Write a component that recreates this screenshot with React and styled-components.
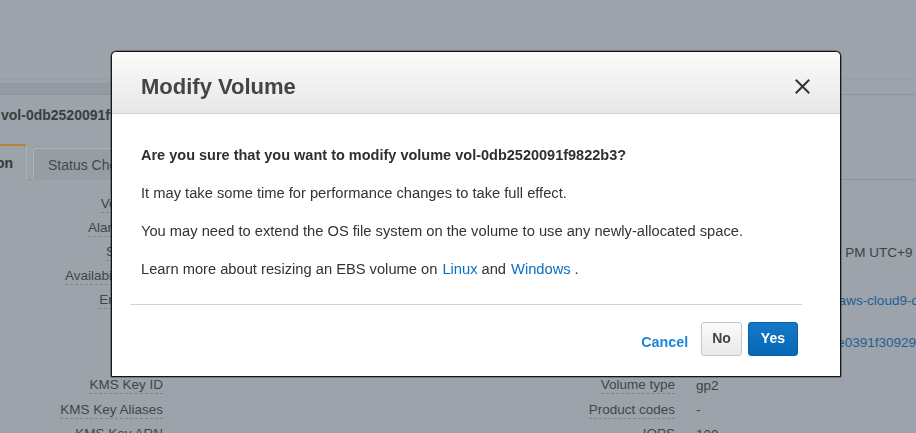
import styled, { createGlobalStyle } from "styled-components";

const Global = createGlobalStyle`
  html, body {
    margin: 0;
    padding: 0;
    width: 916px;
    height: 433px;
    overflow: hidden;
    background: #9ca3aa;
    font-family: "Liberation Sans", Arial, Helvetica, sans-serif;
  }
`;

// dimmed console page behind the dialog
const Page = styled.div`
  width: 916px;
  height: 433px;
  overflow: hidden;
  background: #9ca3aa;
  color: #3e4246;
  font-size: 13.5px;
`;

const TopSpace = styled.div`
  height: 79px;
`;

const Toolbar = styled.div`
  height: 14px;
  border-top: 1px solid #979ea5;
  border-bottom: 1px solid #8e949b;
  display: flex;
  align-items: flex-end;
`;

const ToolbarBand = styled.div`
  width: 420px;
  height: 11px;
  background: #939aa1;
`;

const VolumeTitle = styled.h1`
  margin: 0;
  height: 40px;
  display: flex;
  align-items: center;
  padding-left: 1px;
  font-size: 14px;
  font-weight: 700;
  color: #3a3e42;
  white-space: nowrap;
`;

const Tabs = styled.div`
  display: flex;
  align-items: flex-end;
  height: 44px;
  border-bottom: 1px solid #8e949b;
  margin-left: -79px;
`;

const Tab = styled.div`
  height: ${(p) => (p.$active ? "34px" : "31px")};
  padding: 0 13px 0 14px;
  margin-right: 6px;
  display: flex;
  align-items: center;
  font-size: 14px;
  font-weight: ${(p) => (p.$active ? 700 : 400)};
  color: ${(p) => (p.$active ? "#34383c" : "#44484c")};
  background: ${(p) => (p.$active ? "#9ca3aa" : "#979da4")};
  border: 1px solid #aeb3b8;
  border-top: ${(p) => (p.$active ? "2px solid #b5833a" : "1px solid #aeb3b8")};
  border-bottom: none;
  border-radius: 3px 3px 0 0;
  margin-bottom: -1px;
  white-space: nowrap;
`;

const Details = styled.div`
  display: grid;
  grid-template-columns: 163px 292px 220px 1fr;
  padding-top: 11px;
`;

const Cell = styled.div`
  height: ${(p) => p.$h}px;
  display: flex;
  align-items: center;
  justify-content: ${(p) => (p.$label ? "flex-end" : "flex-start")};
  padding-left: ${(p) => (p.$label ? 0 : 21)}px;
  white-space: nowrap;
`;

const Label = styled.span`
  color: #42464a;
  border-bottom: 1px dashed #80868c;
  line-height: 17px;
`;

const Value = styled.span`
  color: ${(p) => (p.$link ? "#1f5f97" : "#3e4246")};
  line-height: 17px;
`;

// dialog
const Modal = styled.div`
  position: fixed;
  left: 111px;
  top: 51px;
  width: 728px;
  height: 324px;
  background: #fff;
  border: 1px solid #141414;
  border-radius: 5px 5px 0 0;
  box-shadow: 0 0 0 0.5px rgba(0, 0, 0, 0.5);
  display: flex;
  flex-direction: column;
  color: #333;
`;

const Header = styled.div`
  height: 62px;
  flex: none;
  box-sizing: border-box;
  padding: 8px 30px 0 29px;
  border-bottom: 1px solid #cfcfcf;
  border-radius: 5px 5px 0 0;
  background: linear-gradient(#fbfbfb, #e7e7e7);
  display: flex;
  align-items: center;
  justify-content: space-between;
`;

const Title = styled.h2`
  margin: 0;
  font-size: 22px;
  font-weight: 700;
  color: #444;
`;

const Close = styled.button`
  border: 0;
  background: none;
  padding: 0;
  width: 16px;
  height: 16px;
  display: flex;
  align-items: center;
  justify-content: center;
  cursor: pointer;
`;

const Body = styled.div`
  padding: 31px 30px 0 29px;
  display: flex;
  flex-direction: column;
  gap: 18px;
`;

const Para = styled.p`
  margin: 0;
  font-size: ${(p) => (p.$strong ? 14.5 : 14.7)}px;
  line-height: 20px;
  font-weight: ${(p) => (p.$strong ? 700 : 400)};
  color: ${(p) => (p.$strong ? "#2f2f2f" : "#333")};
`;

const Link = styled.a`
  color: #0a6fc2;
  text-decoration: none;
  margin: 0 4px 0 5px;
`;

const Divider = styled.hr`
  margin: 25px 38px 0 18px;
  border: 0;
  border-top: 1px solid #d3d3d3;
`;

const Footer = styled.div`
  display: flex;
  justify-content: flex-end;
  align-items: center;
  padding: 17px 42px 0 0;
`;

const Cancel = styled.a`
  color: #1c86da;
  font-weight: 700;
  font-size: 14.3px;
  margin: 6px 7px 0 0;
  text-decoration: none;
`;

const Button = styled.button`
  height: 34px;
  padding: 0 ${(p) => (p.$primary ? 12 : 10)}px 2px;
  margin-left: 6px;
  font-family: inherit;
  font-size: 14px;
  font-weight: 700;
  border-radius: 3px;
  border: 1px solid ${(p) => (p.$primary ? "#0a5fa6" : "#c6c6c6")};
  color: ${(p) => (p.$primary ? "#fff" : "#444")};
  background: ${(p) =>
    p.$primary
      ? "linear-gradient(#1479c9, #0767b6)"
      : "linear-gradient(#fbfbfb, #e8e8e8)"};
`;

const rows = [
  { h: 25, l: "Volume ID", v: "vol-0db2520091f9822b3", r: "Size", rv: "10 GiB" },
  { h: 24, l: "Alarm status", v: "None", r: "Created", rv: "" },
  { h: 24, l: "Snapshot", v: "snap-0ab5c7e22f4a9c1d", r: "Created", rv: "May 26, 2020 at 2:41:39 PM UTC+9" },
  { h: 24, l: "Availability Zone", v: "ap-northeast-1a", r: "State", rv: "in-use" },
  { h: 24, l: "Encryption", v: "Not Encrypted", r: "Attachment information", rv: "i-04e1a9c2b7d3a8e51 (aws-cloud9-dev)", link: true },
  { h: 20, l: "", v: "", r: "", rv: "" },
  { h: 20, l: "", v: "", r: "Snapshot", rv: "snap-07c14b2d9a8f0c6e0391f30929a", link: true },
  { h: 21, l: "", v: "", r: "", rv: "" },
  { h: 24, l: "KMS Key ID", v: "", r: "Volume type", rv: "gp2" },
  { h: 25, l: "KMS Key Aliases", v: "", r: "Product codes", rv: "-" },
  { h: 24, l: "KMS Key ARN", v: "", r: "IOPS", rv: "100" },
];

function CloseIcon() {
  return (
    <svg width="15" height="15" viewBox="0 0 15 15">
      <path d="M1.5 1.5 L13.5 13.5 M13.5 1.5 L1.5 13.5" stroke="#333" strokeWidth="2" strokeLinecap="square" />
    </svg>
  );
}

export default function App() {
  return (
    <>
      <Global />
      <Page>
        <TopSpace />
        <Toolbar>
          <ToolbarBand />
        </Toolbar>
        <VolumeTitle>vol-0db2520091f9822b3</VolumeTitle>
        <Tabs>
          <Tab $active>Description</Tab>
          <Tab>Status Checks</Tab>
          <Tab>Monitoring</Tab>
          <Tab>Tags</Tab>
        </Tabs>
        <Details>
          {rows.map((row, i) => [
            <Cell key={`l${i}`} $h={row.h} $label>
              {row.l && <Label>{row.l}</Label>}
            </Cell>,
            <Cell key={`v${i}`} $h={row.h}>
              <Value>{row.v}</Value>
            </Cell>,
            <Cell key={`r${i}`} $h={row.h} $label>
              {row.r && <Label>{row.r}</Label>}
            </Cell>,
            <Cell key={`rv${i}`} $h={row.h}>
              <Value $link={row.link}>{row.rv}</Value>
            </Cell>,
          ])}
        </Details>
      </Page>

      <Modal role="dialog">
        <Header>
          <Title>Modify Volume</Title>
          <Close aria-label="Close">
            <CloseIcon />
          </Close>
        </Header>
        <Body>
          <Para $strong>Are you sure that you want to modify volume vol-0db2520091f9822b3?</Para>
          <Para>It may take some time for performance changes to take full effect.</Para>
          <Para>You may need to extend the OS file system on the volume to use any newly-allocated space.</Para>
          <Para>
            Learn more about resizing an EBS volume on<Link href="#">Linux</Link>and<Link href="#">Windows</Link>.
          </Para>
        </Body>
        <Divider />
        <Footer>
          <Cancel href="#">Cancel</Cancel>
          <Button>No</Button>
          <Button $primary>Yes</Button>
        </Footer>
      </Modal>
    </>
  );
}
